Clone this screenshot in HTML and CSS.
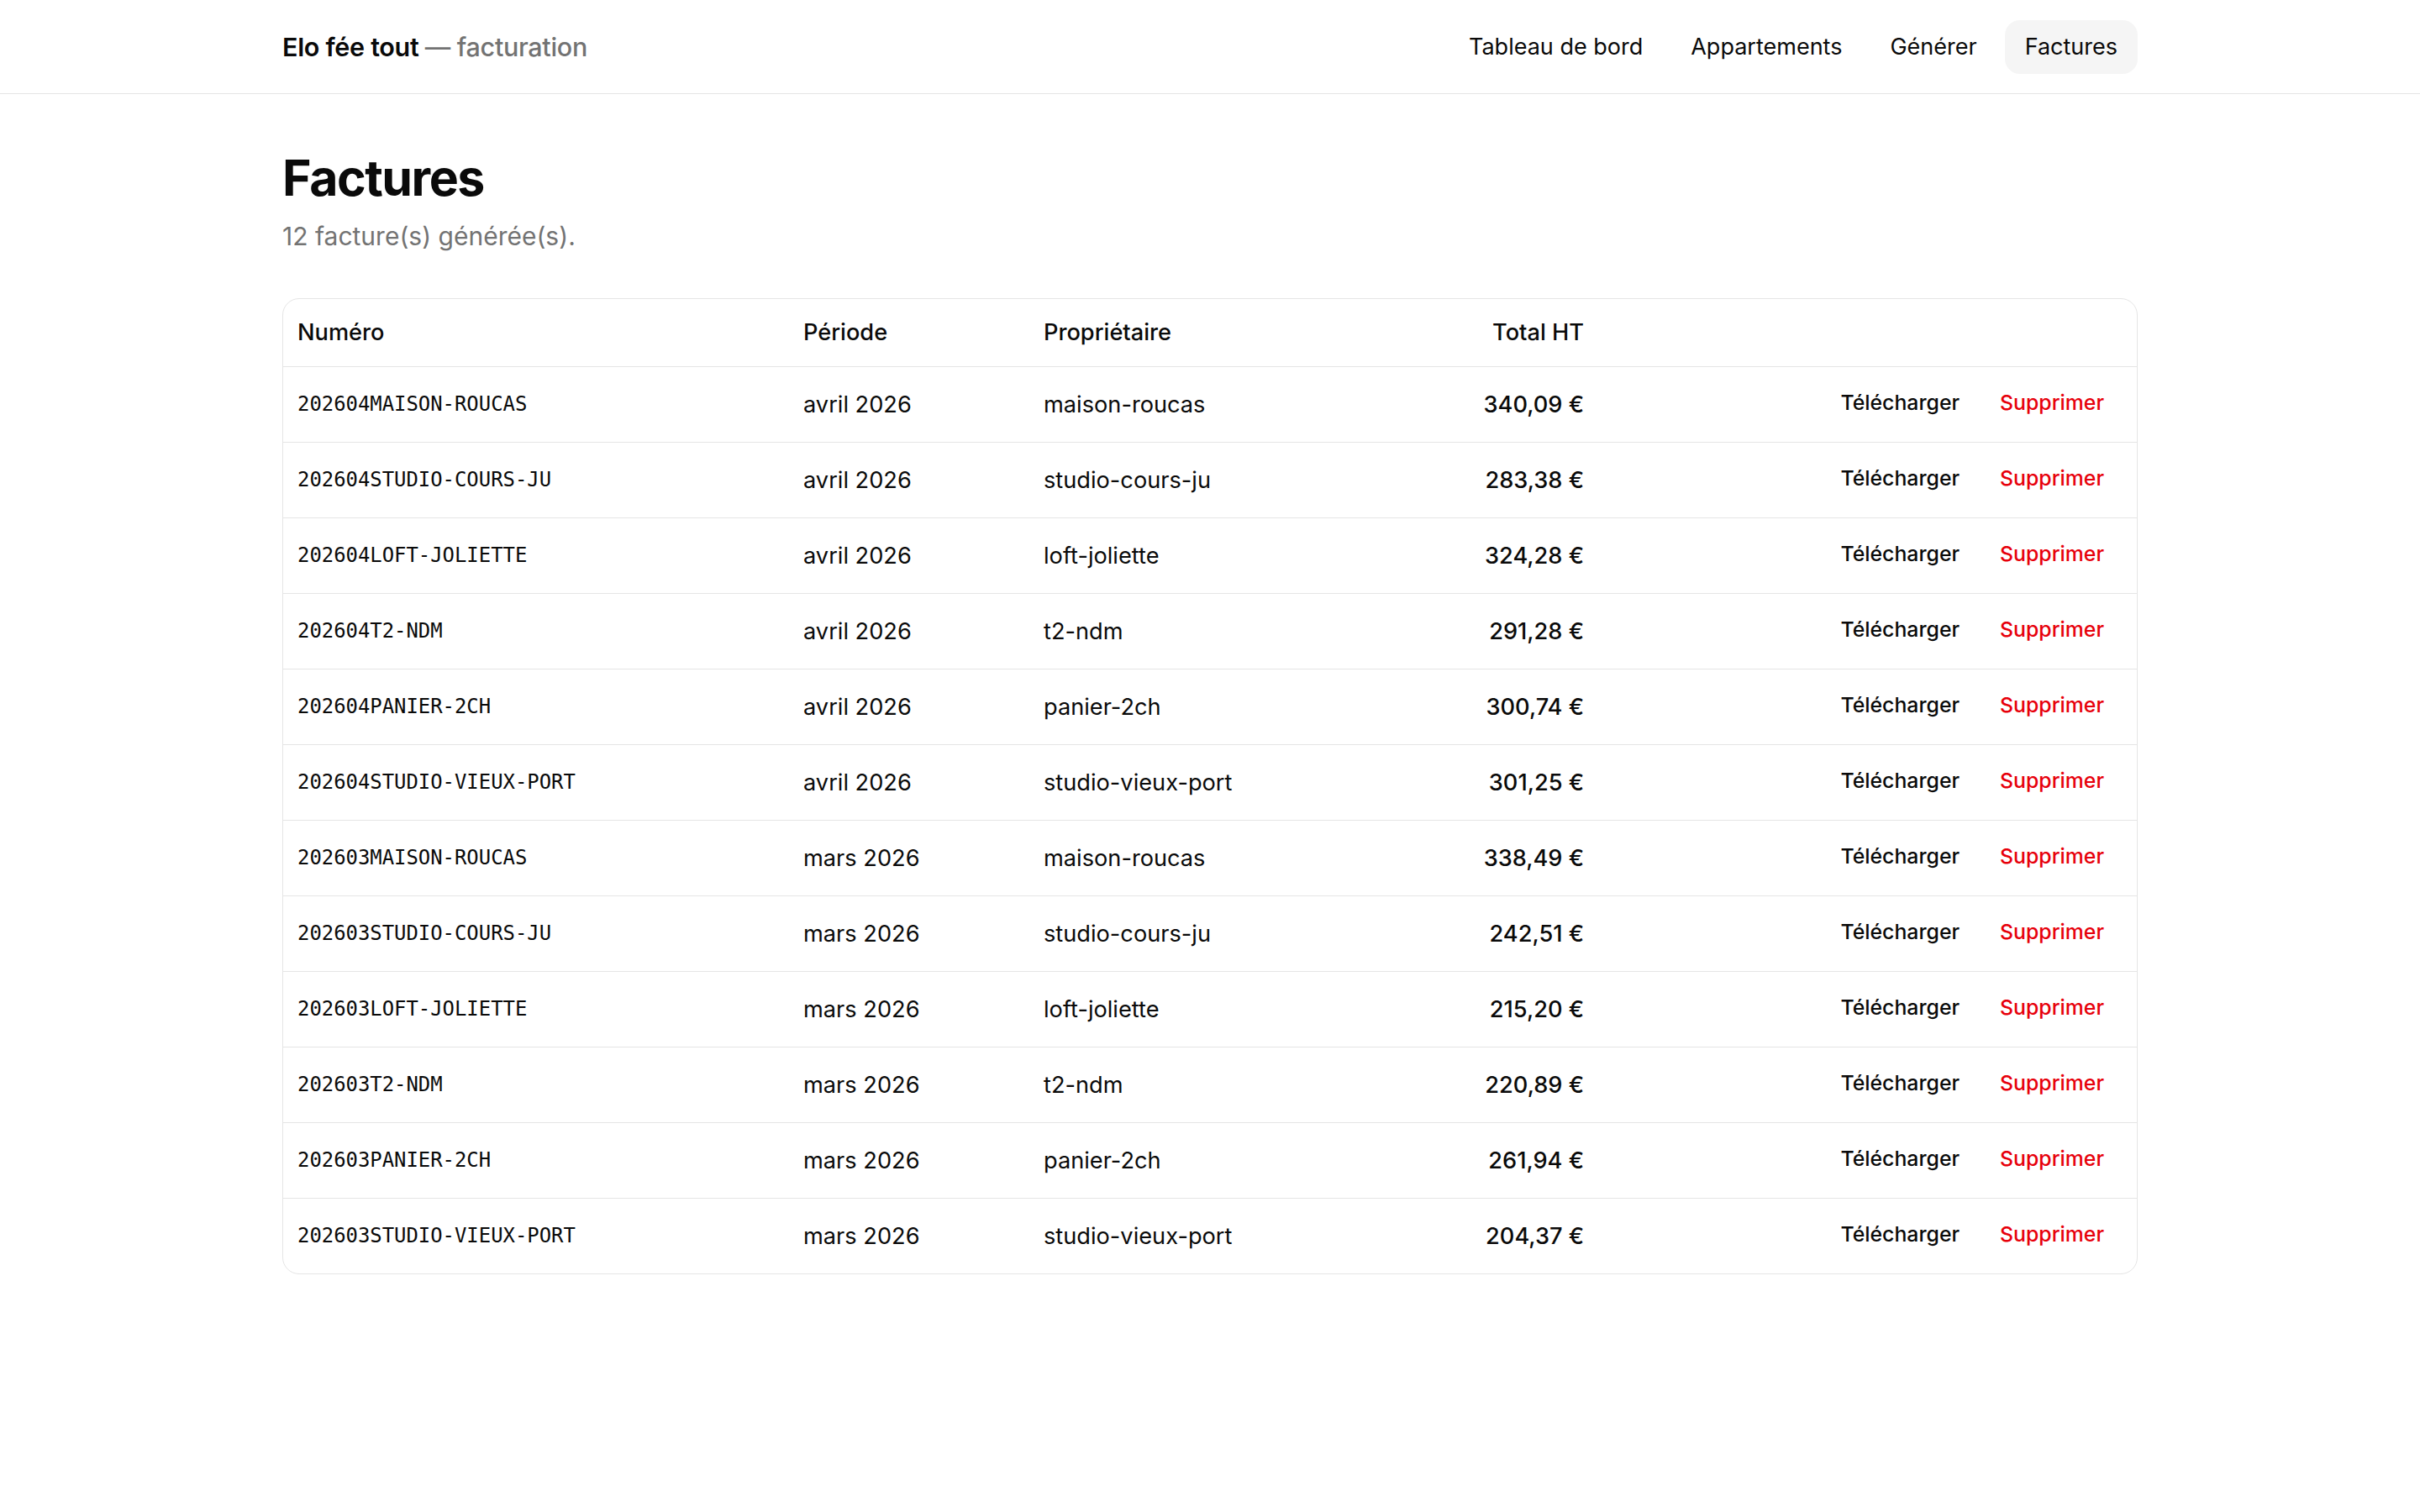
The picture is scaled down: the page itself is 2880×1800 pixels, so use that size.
FILE: index.html
```html
<!DOCTYPE html>
<html lang="fr">
<head>
    <meta charset="UTF-8">
    <meta name="viewport" content="width=device-width, initial-scale=1.0">
    <title>Factures — Elo fée tout</title>
    <link rel="stylesheet" href="styles.css">
</head>
<body>
    <header class="topbar">
        <div class="topbar-inner">
            <a class="brand" href="#">Elo fée tout <span class="brand-sub">— facturation</span></a>
            <nav class="nav">
                <a class="nav-link" href="#">Tableau de bord</a>
                <a class="nav-link" href="#">Appartements</a>
                <a class="nav-link" href="#">Générer</a>
                <a class="nav-link active" href="#">Factures</a>
            </nav>
        </div>
    </header>

    <main class="page">
        <h1 class="page-title">Factures</h1>
        <p class="page-sub">12 facture(s) générée(s).</p>

        <div class="card">
            <table class="invoices">
                <colgroup>
                    <col class="col-num">
                    <col class="col-period">
                    <col class="col-owner">
                    <col class="col-total">
                    <col class="col-actions">
                </colgroup>
                <thead>
                    <tr>
                        <th>Numéro</th>
                        <th>Période</th>
                        <th>Propriétaire</th>
                        <th class="num">Total HT</th>
                        <th></th>
                    </tr>
                </thead>
                <tbody>
                    <tr>
                        <td class="mono">202604MAISON-ROUCAS</td>
                        <td>avril 2026</td>
                        <td>maison-roucas</td>
                        <td class="num amount">340,09 €</td>
                        <td><div class="actions"><a class="btn-link" href="#">Télécharger</a><button class="btn-link danger">Supprimer</button></div></td>
                    </tr>
                    <tr>
                        <td class="mono">202604STUDIO-COURS-JU</td>
                        <td>avril 2026</td>
                        <td>studio-cours-ju</td>
                        <td class="num amount">283,38 €</td>
                        <td><div class="actions"><a class="btn-link" href="#">Télécharger</a><button class="btn-link danger">Supprimer</button></div></td>
                    </tr>
                    <tr>
                        <td class="mono">202604LOFT-JOLIETTE</td>
                        <td>avril 2026</td>
                        <td>loft-joliette</td>
                        <td class="num amount">324,28 €</td>
                        <td><div class="actions"><a class="btn-link" href="#">Télécharger</a><button class="btn-link danger">Supprimer</button></div></td>
                    </tr>
                    <tr>
                        <td class="mono">202604T2-NDM</td>
                        <td>avril 2026</td>
                        <td>t2-ndm</td>
                        <td class="num amount">291,28 €</td>
                        <td><div class="actions"><a class="btn-link" href="#">Télécharger</a><button class="btn-link danger">Supprimer</button></div></td>
                    </tr>
                    <tr>
                        <td class="mono">202604PANIER-2CH</td>
                        <td>avril 2026</td>
                        <td>panier-2ch</td>
                        <td class="num amount">300,74 €</td>
                        <td><div class="actions"><a class="btn-link" href="#">Télécharger</a><button class="btn-link danger">Supprimer</button></div></td>
                    </tr>
                    <tr>
                        <td class="mono">202604STUDIO-VIEUX-PORT</td>
                        <td>avril 2026</td>
                        <td>studio-vieux-port</td>
                        <td class="num amount">301,25 €</td>
                        <td><div class="actions"><a class="btn-link" href="#">Télécharger</a><button class="btn-link danger">Supprimer</button></div></td>
                    </tr>
                    <tr>
                        <td class="mono">202603MAISON-ROUCAS</td>
                        <td>mars 2026</td>
                        <td>maison-roucas</td>
                        <td class="num amount">338,49 €</td>
                        <td><div class="actions"><a class="btn-link" href="#">Télécharger</a><button class="btn-link danger">Supprimer</button></div></td>
                    </tr>
                    <tr>
                        <td class="mono">202603STUDIO-COURS-JU</td>
                        <td>mars 2026</td>
                        <td>studio-cours-ju</td>
                        <td class="num amount">242,51 €</td>
                        <td><div class="actions"><a class="btn-link" href="#">Télécharger</a><button class="btn-link danger">Supprimer</button></div></td>
                    </tr>
                    <tr>
                        <td class="mono">202603LOFT-JOLIETTE</td>
                        <td>mars 2026</td>
                        <td>loft-joliette</td>
                        <td class="num amount">215,20 €</td>
                        <td><div class="actions"><a class="btn-link" href="#">Télécharger</a><button class="btn-link danger">Supprimer</button></div></td>
                    </tr>
                    <tr>
                        <td class="mono">202603T2-NDM</td>
                        <td>mars 2026</td>
                        <td>t2-ndm</td>
                        <td class="num amount">220,89 €</td>
                        <td><div class="actions"><a class="btn-link" href="#">Télécharger</a><button class="btn-link danger">Supprimer</button></div></td>
                    </tr>
                    <tr>
                        <td class="mono">202603PANIER-2CH</td>
                        <td>mars 2026</td>
                        <td>panier-2ch</td>
                        <td class="num amount">261,94 €</td>
                        <td><div class="actions"><a class="btn-link" href="#">Télécharger</a><button class="btn-link danger">Supprimer</button></div></td>
                    </tr>
                    <tr>
                        <td class="mono">202603STUDIO-VIEUX-PORT</td>
                        <td>mars 2026</td>
                        <td>studio-vieux-port</td>
                        <td class="num amount">204,37 €</td>
                        <td><div class="actions"><a class="btn-link" href="#">Télécharger</a><button class="btn-link danger">Supprimer</button></div></td>
                    </tr>
                </tbody>
            </table>
        </div>
    </main>
</body>
</html>
```

FILE: styles.css
```css
body {
    margin: 0;
    padding: 0;
    font-family: Inter, "Noto Sans", sans-serif;
    font-size: 27.2px;
    color: #0a0a0a;
    background: #fff;
}
a {
    color: inherit;
    text-decoration: none;
}

/* top bar */
.topbar {
    border-bottom: 1px solid #e5e5e5;
}
.topbar-inner {
    max-width: 2208px;
    margin: 0 auto;
    height: 111px;
    display: flex;
    align-items: center;
    justify-content: space-between;
}
.brand {
    font-size: 30.5px;
    font-weight: 600;
    letter-spacing: -0.01em;
}
.brand-sub {
    color: #737373;
    font-weight: 500;
}
.nav {
    display: flex;
    align-items: center;
    gap: 9px;
}
.nav-link {
    font-size: 27px;
    line-height: 40px;
    padding: 12px 24px;
    border-radius: 18px;
}
.nav-link.active {
    background: #f5f5f5;
}

/* page */
.page {
    max-width: 2208px;
    margin: 0 auto;
    padding: 67px 0 120px;
}
.page-title {
    margin: 0;
    font-size: 59px;
    line-height: 66px;
    font-weight: 700;
    letter-spacing: -0.025em;
}
.page-sub {
    margin: 14px 0 0;
    font-size: 30px;
    line-height: 44px;
    color: #737373;
}

/* invoices table */
.card {
    margin-top: 52px;
    border: 1px solid #e5e5e5;
    border-radius: 20px;
    overflow: hidden;
}
.invoices {
    width: 100%;
    border-collapse: collapse;
    table-layout: fixed;
}
.col-num { width: 602px; }
.col-period { width: 286px; }
.col-owner { width: 440px; }
.col-total { width: 237px; }
.invoices th {
    text-align: left;
    font-weight: 500;
    line-height: 41px;
    padding: 19px 17px 20px;
    border-bottom: 1px solid #e5e5e5;
}
.invoices td {
    line-height: 41px;
    padding: 24px 17px;
    border-bottom: 1px solid #e5e5e5;
    white-space: nowrap;
}
.invoices tbody tr:last-child td {
    border-bottom: none;
}
.invoices .num {
    text-align: right;
}
.mono {
    font-family: "DejaVu Sans Mono", "Liberation Mono", monospace;
    font-size: 23.9px;
}
.amount {
    font-weight: 500;
}
.actions {
    display: flex;
    justify-content: flex-end;
    align-items: center;
    gap: 4px;
    height: 41px;
}
.btn-link {
    font-family: inherit;
    font-size: 24.8px;
    font-weight: 500;
    line-height: 36px;
    padding: 0 22px 5px;
    border: none;
    background: none;
    color: #0a0a0a;
    cursor: pointer;
}
.btn-link.danger {
    color: #e7000b;
}
```
